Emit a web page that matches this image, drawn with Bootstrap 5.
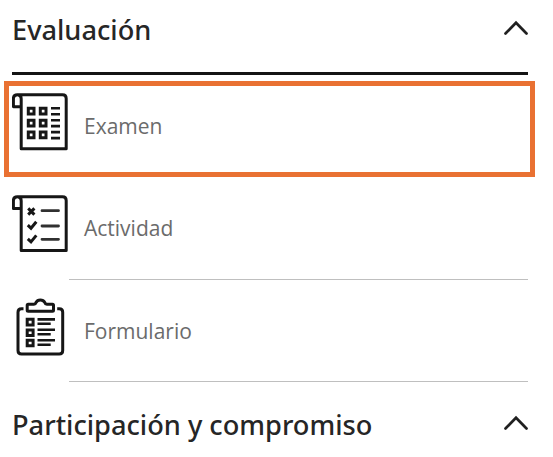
<!DOCTYPE html>
<html lang="es">
<head>
<meta charset="utf-8">
<meta name="viewport" content="width=device-width, initial-scale=1">
<title>Evaluación</title>
<link href="https://cdn.jsdelivr.net/npm/bootstrap@5.3.0/dist/css/bootstrap.min.css" rel="stylesheet">
<style>
body { font-family: "Open Sans", "Noto Sans", sans-serif; background: #fff; color: #262626; overflow: hidden; }
.panel { width: 516px; margin-left: 12px; }
.group-title { font-family: "Noto Sans", "Open Sans", sans-serif; font-size: 27.2px; font-weight: 500; line-height: 36px; padding-top: 1px; }
.group-head { height: 75px; padding-top: 11px; border-bottom: 3px solid #141414; }
.group-head.next { border: 0; height: 75px; padding-top: 24px; }
.chevron { width: 26px; height: 16px; margin: 9px -1px 0 0; }
.item-row { height: 102px; color: #6b6b6b; font-size: 21px; line-height: 30px; }
.item-row.marked { height: 96px; margin: 6px -7px 0 -8px; padding-left: 3px; border: 5px solid #e97132; }
.item-row.marked + .item-row { height: 103px; }
.item-icon { width: 57px; height: 58px; margin-top: 18px; color: #161616; }
.marked .item-icon { margin-top: 7px; }
.item-label { margin: 36px 0 0 15px; }
.marked .item-label { margin-top: 25px; }
.item-rule { height: 1px; margin-left: 57px; background: #bfbfbf; }
</style>
</head>
<body>
<main class="panel">
  <div class="group-head d-flex justify-content-between align-items-start">
    <h2 class="group-title m-0">Evaluación</h2>
    <svg class="chevron" viewBox="0 0 26 16" fill="none" stroke="#202020" stroke-width="2.7" stroke-linecap="round"><path d="M2.500 13.500 13 2.800 23.500 13.500"/></svg>
  </div>

  <div class="item-row marked d-flex align-items-start">
    <svg class="item-icon" viewBox="12 13 57 58" fill="none" stroke="currentColor" stroke-width="3">
      <path d="M21.200 26.700H13.400V18.700Q13.400 14.700 17.300 14.700H62.500Q66.200 14.700 66.200 18.400V68.700H21.200V18.700Q21.200 14.700 17.300 14.700" stroke-linejoin="round"/>
      <path d="M28.300 28.300h5.700v5.700h-5.700zM40.300 28.300h5.700v5.700h-5.700zM28.300 40.200h5.700v5.700h-5.700zM40.300 40.200h5.700v5.700h-5.700zM28.300 52.100h5.700v5.700h-5.700zM40.300 52.100h5.700v5.700h-5.700z"/>
      <path stroke-width="2.600" d="M51 28.200h9M51 34.200h9M51 40.200h9M51 46.100h9M51 52.100h9M51 58.100h9"/>
    </svg>
    <span class="item-label">Examen</span>
  </div>

  <div class="item-row d-flex flex-column">
    <div class="d-flex flex-grow-1 align-items-start">
      <svg class="item-icon" viewBox="12 10 57 58" fill="none" stroke="currentColor" stroke-width="3">
        <path d="M21.200 23.600H13.400V15.700Q13.400 11.700 17.300 11.700H62.500Q66.200 11.700 66.200 15.400V65.500H21.200V15.700Q21.200 11.700 17.300 11.700" stroke-linejoin="round"/>
        <path d="M28.200 23.400l6.200 6.200M34.400 23.400l-6.200 6.200M27.800 40.200l3.200 3 5.300-6.500M27.800 53.900l3.200 3 5.300-6.500"/>
        <path stroke-width="2.800" stroke-linecap="round" stroke="#303030" d="M42 25.700h16.500M42 41h16.500M42 54.300h16.500"/>
      </svg>
      <span class="item-label">Actividad</span>
    </div>
    <div class="item-rule"></div>
  </div>

  <div class="item-row d-flex flex-column">
    <div class="d-flex flex-grow-1 align-items-start">
      <svg class="item-icon" viewBox="12 10 57 58" fill="none" stroke="currentColor" stroke-width="3" stroke-linejoin="round">
        <path d="M23.500 20.800H21.500Q18 20.800 18 24.300V62.500Q18 66 21.500 66H59.200Q62.700 66 62.700 62.500V24.300Q62.700 20.800 59.200 20.800H57.200"/>
        <path d="M28.200 16.200H34Q35.500 16.200 36 14.500Q37.200 12 40.300 12T44.800 14.500Q45.300 16.200 46.800 16.200H52.500Q53.500 16.200 53.500 17.200V22.200Q53.500 23.200 52.500 23.200H28.200Q27.200 23.200 27.200 22.200V17.200Q27.200 16.200 28.200 16.200Z"/>
        <path stroke-linejoin="miter" d="M27.200 31.300h5.900v5.700h-5.900zM27.200 41.900h5.900v5.700h-5.900zM27.200 52.300h5.900v5.500h-5.900z"/>
        <path stroke-width="2.600" d="M37.500 31.400H55M37.500 35.800H50.700M37.500 41.800H55M37.500 46.300H50.700M37.500 52.300H55M37.500 56.800H50.700"/>
      </svg>
      <span class="item-label">Formulario</span>
    </div>
    <div class="item-rule"></div>
  </div>

  <div class="group-head next d-flex justify-content-between align-items-start">
    <h2 class="group-title m-0">Participación y compromiso</h2>
    <svg class="chevron" viewBox="0 0 26 16" fill="none" stroke="#202020" stroke-width="2.7" stroke-linecap="round"><path d="M2.500 13.500 13 2.800 23.500 13.500"/></svg>
  </div>
</main>
<script src="https://cdn.jsdelivr.net/npm/bootstrap@5.3.0/dist/js/bootstrap.bundle.min.js"></script>
</body>
</html>
